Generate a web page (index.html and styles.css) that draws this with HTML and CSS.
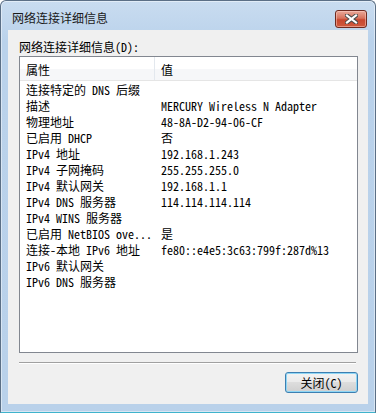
FILE: index.html
```html
<!DOCTYPE html>
<html lang="zh-CN">
<head>
    <meta charset="UTF-8">
    <title>网络连接详细信息</title>
    <link rel="stylesheet" href="styles.css">
</head>
<body>

    <div class="window">
        <!-- Barre de titre -->
        <div class="titlebar">
            <span class="title">网络连接详细信息</span>
            <button class="close-btn" title="关闭">
                <svg width="13" height="10" viewBox="0 0 13 10">
                    <path d="M2 1.5 L11 8.5 M11 1.5 L2 8.5" stroke="#4b4b4b" stroke-width="4.2" stroke-linecap="square" fill="none"/>
                    <path d="M2 1.5 L11 8.5 M11 1.5 L2 8.5" stroke="#ffffff" stroke-width="2.2" stroke-linecap="square" fill="none"/>
                </svg>
            </button>
        </div>

        <div class="client">
            <div class="label">网络连接详细信息(D):</div>

            <!-- Liste des propriétés -->
            <div class="listview">
                <div class="lv-header">
                    <div class="lv-col">属性</div>
                    <div class="lv-col">值</div>
                </div>
                <div class="lv-body">
                    <div class="lv-row"><span>连接特定的 DNS 后缀</span><span></span></div>
                    <div class="lv-row"><span>描述</span><span>MERCURY Wireless N Adapter</span></div>
                    <div class="lv-row"><span>物理地址</span><span>48-8A-D2-94-06-CF</span></div>
                    <div class="lv-row"><span>已启用 DHCP</span><span>否</span></div>
                    <div class="lv-row"><span>IPv4 地址</span><span>192.168.1.243</span></div>
                    <div class="lv-row"><span>IPv4 子网掩码</span><span>255.255.255.0</span></div>
                    <div class="lv-row"><span>IPv4 默认网关</span><span>192.168.1.1</span></div>
                    <div class="lv-row"><span>IPv4 DNS 服务器</span><span>114.114.114.114</span></div>
                    <div class="lv-row"><span>IPv4 WINS 服务器</span><span></span></div>
                    <div class="lv-row"><span>已启用 NetBIOS ove...</span><span>是</span></div>
                    <div class="lv-row"><span>连接-本地 IPv6 地址</span><span>fe80::e4e5:3c63:799f:287d%13</span></div>
                    <div class="lv-row"><span>IPv6 默认网关</span><span></span></div>
                    <div class="lv-row"><span>IPv6 DNS 服务器</span><span></span></div>
                </div>
            </div>

            <div class="separator"></div>

            <div class="actions">
                <button class="btn-default">关闭(C)</button>
            </div>
        </div>
    </div>

</body>
</html>
```

FILE: styles.css
```css
body {
    margin: 0;
    background: #ffffff;
    font-family: "Noto Sans Mono CJK SC", "Noto Sans CJK SC", monospace;
    font-size: 12px;
    color: #000;
}
.window {
    width: 376px;
    height: 413px;
    box-sizing: border-box;
    border: 1px solid #5b6f86;
    border-bottom-color: #3fb3cc;
    border-radius: 6px 6px 0 0;
    background: linear-gradient(#c9dcf0, #bad2eb 40px, #b9d1ea);
    box-shadow: inset 0 0 0 1px rgba(255, 255, 255, 0.45);
    padding: 0 7px 8px 7px;
}
.titlebar {
    height: 29px;
    display: flex;
    align-items: flex-start;
}
.title {
    font-family: "Noto Sans CJK SC", sans-serif;
    font-size: 12px;
    line-height: 14px;
    margin: 10px 0 0 4px;
    color: #1a1a1a;
}
.close-btn {
    margin: 9px 1px 0 auto;
    width: 32px;
    height: 18px;
    padding: 0;
    border: 1px solid #6e2a20;
    border-radius: 3px;
    background: linear-gradient(#e9a99a, #d7725d 45%, #c8472f 55%, #cf5a3e);
    box-shadow: inset 0 0 0 1px rgba(255, 210, 200, 0.5);
    display: flex;
    align-items: center;
    justify-content: center;
}
.client {
    height: 374px;
    background: #f0f0f0;
    padding: 9px 10px 0 11px;
    box-sizing: border-box;
}
.label {
    line-height: 16px;
    margin-bottom: 1px;
}
.listview {
    height: 297px;
    box-sizing: border-box;
    border: 1px solid #828790;
    background: #ffffff;
}
.lv-header {
    display: grid;
    grid-template-columns: 135px 1fr;
    height: 23px;
    border-bottom: 1px solid #e5e5e5;
    background: linear-gradient(#ffffff 50%, #f6f7f9 50%);
}
.lv-col {
    padding: 2px 0 0 6px;
    line-height: 21px;
}
.lv-col:first-child {
    border-right: 1px solid #e3e8ee;
}
.lv-body {
    padding-top: 1px;
}
.lv-row {
    display: grid;
    grid-template-columns: 135px 1fr;
    height: 16px;
    line-height: 16px;
    white-space: nowrap;
}
.lv-row span:first-child {
    padding-left: 6px;
}
.lv-row span:last-child {
    padding-left: 6px;
}
.separator {
    margin-top: 9px;
    width: 337px;
    border-top: 1px solid #a0a0a0;
    border-bottom: 1px solid #ffffff;
}
.actions {
    display: flex;
    justify-content: flex-end;
    margin-top: 8px;
}
.btn-default {
    width: 73px;
    height: 21px;
    padding: 0;
    font-family: "Noto Sans Mono CJK SC", "Noto Sans CJK SC", monospace;
    font-size: 12px;
    color: #000;
    border: 1px solid #3c7fb1;
    border-radius: 3px;
    background: linear-gradient(#f3f3f3, #ebebeb 45%, #dddddd 50%, #cfcfcf);
    box-shadow: inset 0 0 0 1px #8fd6f5;
}
```
